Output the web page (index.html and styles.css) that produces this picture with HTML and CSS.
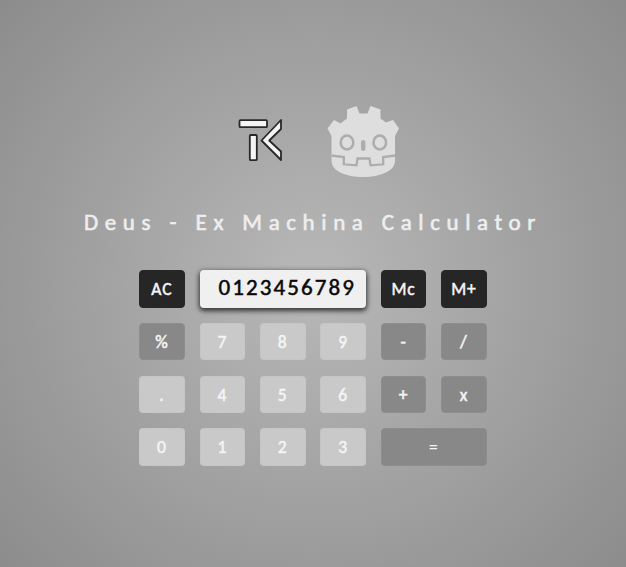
FILE: index.html
```html
<!DOCTYPE html>
<html lang="en">
<head>
<meta charset="utf-8">
<title>Deus - Ex Machina Calculator</title>
<link rel="stylesheet" href="styles.css">
</head>
<body>
<main class="app">
  <header class="logos">
    <svg class="logo-tk" viewBox="0 0 46 44" aria-hidden="true">
      <rect x="1.5" y="2.200" width="27.5" height="7" rx="1"/>
      <rect x="11.8" y="17" width="7" height="25.2" rx="1"/>
      <path d="M43 2 23.5 22.5 43 42V33.5L31.2 22.5 43 11Z"/>
    </svg>
    <svg class="logo-robot" viewBox="0 0 74 74" aria-hidden="true">
      <path class="face" d="M21 5.500 30.500 2 33.500 9.500H41.500L44.500 2 54.500 5.500V14.500L60 18.500 67 16 73 24.500 69 32V57C69 67 54 73 37 73S5.500 67 5.500 57V32L1.500 24.500 8 16 14.500 19.500 21 14.500Z"/>
      <ellipse class="eye" cx="21" cy="38.500" rx="6.300" ry="7"/>
      <ellipse class="eye" cx="53.800" cy="38.500" rx="6.300" ry="7"/>
      <rect class="nose" x="35" y="36" width="4.400" height="11" rx="2.200"/>
      <path class="mouth" d="M5.500 51.500 17.800 53V60.300L30.500 61.300 31.500 54.500H43.500L44.500 61.300 57.200 60.300V53L69 51.500"/>
    </svg>
  </header>
  <h1 class="title">Deus - Ex Machina Calculator</h1>
  <section class="keypad">
    <button class="key dark">AC</button>
    <output class="display">0123456789</output>
    <button class="key dark">Mc</button>
    <button class="key dark">M+</button>
    <button class="key op">%</button>
    <button class="key">7</button>
    <button class="key">8</button>
    <button class="key">9</button>
    <button class="key op">-</button>
    <button class="key op">/</button>
    <button class="key">.</button>
    <button class="key">4</button>
    <button class="key">5</button>
    <button class="key">6</button>
    <button class="key op">+</button>
    <button class="key op">x</button>
    <button class="key">0</button>
    <button class="key">1</button>
    <button class="key">2</button>
    <button class="key">3</button>
    <button class="key op wide">=</button>
  </section>
</main>
</body>
</html>
```
FILE: styles.css
```css
* {
  box-sizing: border-box;
}

body {
  margin: 0;
  height: 567px;
  overflow: hidden;
  background: radial-gradient(circle at center, #b8b8b8, #8c8c8c);
  font-family: Calibri, Carlito, Lato, sans-serif;
}

.app {
  display: flex;
  flex-direction: column;
  align-items: center;
  padding-top: 104px;
}

.logos {
  display: flex;
  gap: 42px;
  padding-left: 12px;
  height: 74px;
}

.logo-tk {
  width: 46px;
  height: 44px;
  margin-top: 14px;
  fill: #f5f5f5;
  stroke: #282828;
  stroke-width: 1.8;
  stroke-linejoin: round;
}

.logo-robot {
  width: 74px;
  height: 74px;
}

.face {
  fill: #dedede;
}

.eye {
  fill: #dedede;
  stroke: #adadad;
  stroke-width: 2.6;
}

.nose {
  fill: #adadad;
}

.mouth {
  fill: none;
  stroke: #adadad;
  stroke-width: 2.3;
}

.title {
  margin: 31px 0 0;
  height: 61px;
  font-size: 23px;
  line-height: 27px;
  font-weight: 400;
  letter-spacing: 6.6px;
  word-spacing: 0.6px;
  white-space: nowrap;
  color: #eee;
  -webkit-text-stroke: 0.6px #eee;
}

.keypad {
  display: grid;
  grid-template-columns: repeat(6, 45.6px);
  grid-auto-rows: 37.5px;
  gap: 15.25px 14.8px;
}

.key {
  padding: 2px 0 0;
  border: 1px solid rgba(190, 190, 190, 0.25);
  border-radius: 4px;
  background: #c9c9c9;
  color: #f5f5f5;
  font: 400 17.5px/1 Calibri, Carlito, Lato, sans-serif;
  letter-spacing: 1px;
  -webkit-text-stroke: 0.5px #f5f5f5;
}

.dark {
  padding-top: 1px;
  border-color: #262626;
  background: #262626;
}

.op {
  border-color: #8d8d8d;
  background: #888;
}

.wide {
  grid-column: span 2;
  -webkit-text-stroke-width: 0.1px;
}

.display {
  grid-column: span 3;
  padding-right: 10px;
  border-radius: 4px;
  background: #f0f0f0;
  box-shadow: 0 2px 5px 1px rgba(0, 0, 0, 0.7);
  color: #090909;
  font-size: 23px;
  font-weight: 400;
  line-height: 35px;
  letter-spacing: 2.1px;
  text-align: right;
  -webkit-text-stroke: 0.5px #090909;
}
```
